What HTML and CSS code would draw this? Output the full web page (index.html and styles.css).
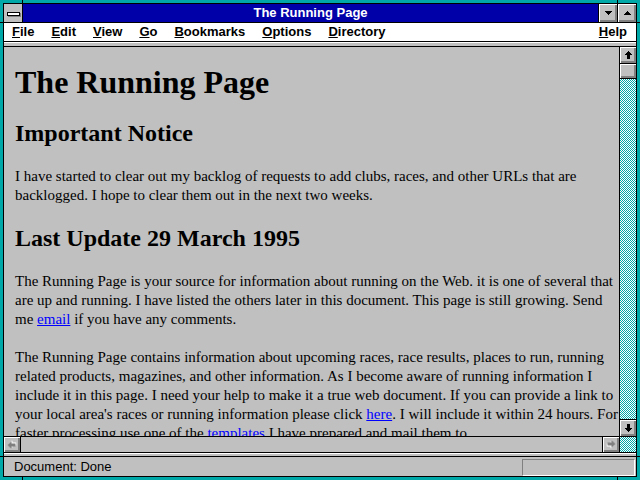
FILE: index.html
```html
<!DOCTYPE html>
<html lang="en">
<head>
    <meta charset="UTF-8">
    <meta name="viewport" content="width=device-width, initial-scale=1.0">
    <title>The Running Page</title>
    <link rel="stylesheet" href="styles.css">
</head>
<body>
    <div class="window">
        <span class="tick tick-v tick-top tick-left"></span>
        <span class="tick tick-v tick-top tick-right"></span>
        <span class="tick tick-v tick-bottom tick-left"></span>
        <span class="tick tick-v tick-bottom tick-right"></span>
        <span class="tick tick-h tick-top tick-left"></span>
        <span class="tick tick-h tick-top tick-right"></span>
        <span class="tick tick-h tick-bottom tick-left"></span>
        <span class="tick tick-h tick-bottom tick-right"></span>

        <div class="frame">
            <div class="titlebar">
                <div class="sysbox"><span class="sysbar"></span></div>
                <div class="title">The Running Page</div>
                <div class="tbtn">
                    <svg width="7" height="4" viewBox="0 0 7 4"><path d="M0 0h7v1h-1v1h-1v1h-1v1h-1v-1h-1v-1h-1v-1h-1z"/></svg>
                </div>
                <div class="tbtn">
                    <svg class="flip" width="7" height="4" viewBox="0 0 7 4"><path d="M0 0h7v1h-1v1h-1v1h-1v1h-1v-1h-1v-1h-1v-1h-1z"/></svg>
                </div>
            </div>

            <div class="menubar">
                <span class="menu"><u>F</u>ile</span>
                <span class="menu"><u>E</u>dit</span>
                <span class="menu"><u>V</u>iew</span>
                <span class="menu"><u>G</u>o</span>
                <span class="menu"><u>B</u>ookmarks</span>
                <span class="menu"><u>O</u>ptions</span>
                <span class="menu"><u>D</u>irectory</span>
                <span class="menu help"><u>H</u>elp</span>
            </div>
            <div class="sep sep-top"></div>

            <div class="main">
                <div class="page">
                    <h1>The Running Page</h1>
                    <h2>Important Notice</h2>
                    <p>I have started to clear out my backlog of requests to add clubs, races, and other URLs that are<br>
                    backlogged. I hope to clear them out in the next two weeks.</p>
                    <h2>Last Update 29 March 1995</h2>
                    <p>The Running Page is your source for information about running on the Web. it is one of several that<br>
                    are up and running. I have listed the others later in this document. This page is still growing. Send<br>
                    me <a href="#">email</a> if you have any comments.</p>
                    <p>The Running Page contains information about upcoming races, race results, places to run, running<br>
                    related products, magazines, and other information. As I become aware of running information I<br>
                    include it in this page. I need your help to make it a true web document. If you can provide a link to<br>
                    your local area's races or running information please click <a href="#">here</a>. I will include it within 24 hours. For<br>
                    faster processing use one of the <a href="#">templates</a> I have prepared and mail them to</p>
                </div>

                <div class="vscroll">
                    <div class="sbtn up">
                        <svg width="7" height="8" viewBox="0 0 7 8"><path d="M3 0h1v1h1v1h1v1h1v1h-2v4h-3v-4h-2v-1h1v-1h1v-1h1z"/></svg>
                    </div>
                    <div class="thumb"></div>
                    <div class="track"></div>
                    <div class="sbtn down">
                        <svg class="flip" width="7" height="8" viewBox="0 0 7 8"><path d="M3 0h1v1h1v1h1v1h1v1h-2v4h-3v-4h-2v-1h1v-1h1v-1h1z"/></svg>
                    </div>
                </div>

                <div class="hscroll">
                    <div class="sbtn left">
                        <svg class="turn-left" width="8" height="9" viewBox="0 0 8 9">
                            <path class="shade" d="M4 1h1v1h1v1h1v1h1v1h-2v4h-3v-4h-2v-1h1v-1h1v-1h1z"/>
                            <path class="dim" d="M3 0h1v1h1v1h1v1h1v1h-2v4h-3v-4h-2v-1h1v-1h1v-1h1z"/>
                        </svg>
                    </div>
                    <div class="htrack"></div>
                    <div class="sbtn right">
                        <svg class="turn-right" width="8" height="9" viewBox="0 0 8 9">
                            <path class="shade" d="M4 1h1v1h1v1h1v1h1v1h-2v4h-3v-4h-2v-1h1v-1h1v-1h1z"/>
                            <path class="dim" d="M3 0h1v1h1v1h1v1h1v1h-2v4h-3v-4h-2v-1h1v-1h1v-1h1z"/>
                        </svg>
                    </div>
                </div>
                <div class="corner"></div>
            </div>

            <div class="sep sep-bottom"></div>
            <div class="status">
                <span class="status-text">Document: Done</span>
                <span class="progress"></span>
            </div>
        </div>
    </div>
</body>
</html>
```

FILE: styles.css
```css
* {margin: 0; padding: 0; box-sizing: border-box;}
body {width: 640px; height: 480px; overflow: hidden; background: #00a8a8;}

/* window frame */
.window {position: relative; width: 640px; height: 480px; border: 3px solid #00a8a8;}
.frame {
    height: 100%; border: 1px solid #000; background: #c0c0c0;
    display: flex; flex-direction: column;
}
.tick {position: absolute; background: #000;}
.tick-v {width: 1px; height: 3px;}
.tick-v.tick-top {top: -3px;}
.tick-v.tick-bottom {bottom: -3px;}
.tick-v.tick-left {left: 19px;}
.tick-v.tick-right {right: 19px;}
.tick-h {width: 3px; height: 1px;}
.tick-h.tick-left {left: -3px;}
.tick-h.tick-right {right: -3px;}
.tick-h.tick-top {top: 19px;}
.tick-h.tick-bottom {bottom: 20px;}

/* title bar */
.titlebar {display: flex; height: 19px; border-bottom: 1px solid #000; background: #0000a8;}
.sysbox {
    width: 19px; border-right: 1px solid #000; background: #c0c0c0;
    display: flex; align-items: center; justify-content: center;
}
.sysbar {width: 13px; height: 4px; margin-top: 1px; background: #fff; border: 1px solid #000; box-shadow: 1px 1px #808080;}
.title {
    flex: 1; text-align: center; color: #fff;
    font: bold 13px/18px "Liberation Sans", Arial, sans-serif;
}
.tbtn {
    width: 19px; border-left: 1px solid #000; background: #c0c0c0;
    display: flex; align-items: center; justify-content: center;
    box-shadow: inset 1px 1px #fff, inset -1px -1px #808080, inset -2px -2px #808080;
}
.flip {transform: rotate(180deg);}

/* menu */
.menubar {
    display: flex; height: 19px; border-bottom: 1px solid #000; background: #fff;
    font: bold 13px/18px "Liberation Sans", Arial, sans-serif; color: #000;
}
.menu {padding: 0 9px 0 8px;}
.menu u {text-underline-offset: 1px;}
.menu.help {margin-left: auto; padding-right: 9px;}

.sep {background: #c0c0c0; border-top: 1px solid #fff; border-bottom: 1px solid #000;}
.sep-top {height: 5px;}
.sep-bottom {height: 4px;}

/* document area */
.main {flex: 1; display: grid; grid-template-columns: 1fr 17px; grid-template-rows: 1fr 17px; min-height: 0;}
.page {
    overflow: hidden; padding: 17px 11px 0; background: #c0c0c0; color: #000;
    font-family: "Liberation Serif", "Times New Roman", serif;
}
.page h1 {font-size: 32px; line-height: 36px; margin: 0 0 19px;}
.page h2 {font-size: 24px; line-height: 28px; margin: 19px 0 20px;}
.page p {font-size: 15px; line-height: 19px; margin: 0 0 19px; white-space: nowrap;}
.page a {color: #0000ff; text-decoration: underline;}

/* scroll bars */
.track, .corner {background: repeating-conic-gradient(#00a8a8 0 25%, #fff 0 50%) 0 0 / 2px 2px;}
.sbtn, .thumb {
    background: #c0c0c0;
    box-shadow: inset 1px 1px #fff, inset -1px -1px #808080, inset -2px -2px #808080;
}
.sbtn {display: flex; align-items: center; justify-content: center;}
.vscroll {border-left: 1px solid #000; display: flex; flex-direction: column; min-height: 0;}
.vscroll .up {height: 17px; border-bottom: 1px solid #000;}
.vscroll .thumb {height: 15px; border-bottom: 1px solid #000;}
.vscroll .track {flex: 1;}
.vscroll .down {height: 17px; border-top: 1px solid #000;}

.hscroll {display: flex; border-top: 1px solid #000; border-bottom: 1px solid #000;}
.hscroll .left {width: 17px; border-right: 1px solid #000;}
.hscroll .right {width: 17px; border-left: 1px solid #000;}
.htrack {flex: 1; background: #c0c0c0;}
.turn-left {transform: rotate(-90deg);}
.turn-right {transform: rotate(90deg);}
.shade {fill: #fff;}
.dim {fill: #808080;}
.corner {border-top: 1px solid #000; border-bottom: 1px solid #000; border-left: 1px solid #000;}

/* status bar */
.status {
    display: flex; height: 19px; padding-left: 10px;
    font: 13px/19px "Liberation Sans", Arial, sans-serif; color: #000;
}
.progress {
    margin: 2px 1px 0 auto; width: 113px; height: 17px;
    border: 1px solid; border-color: #808080 #fff #fff #808080;
}
```
